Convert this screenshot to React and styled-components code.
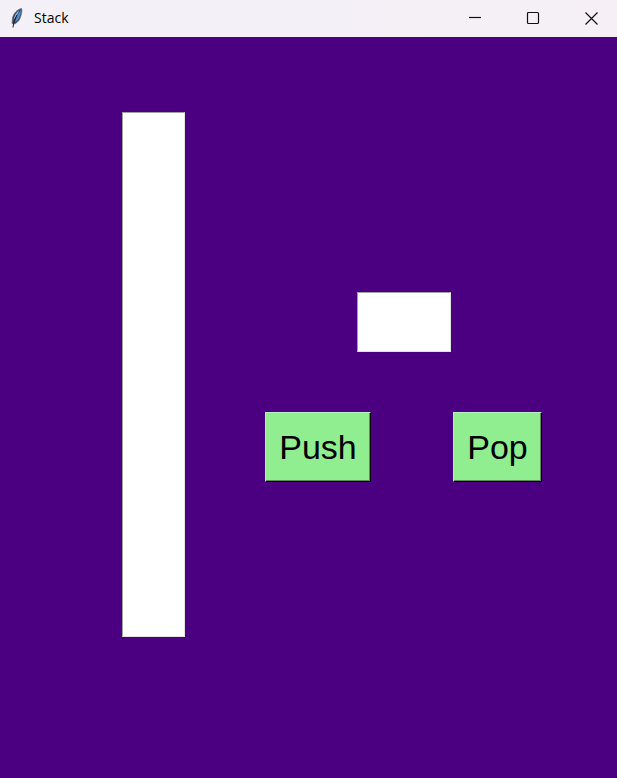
import React, { useState } from "react";
import styled, { createGlobalStyle } from "styled-components";

const GlobalStyle = createGlobalStyle`
  *, *::before, *::after { box-sizing: border-box; }
  body { margin: 0; background: #4b0082; }
`;

const Window = styled.div`
  display: flex;
  flex-direction: column;
  min-height: 100vh;
  background: #4b0082;
`;

const TitleBar = styled.header`
  display: flex;
  align-items: center;
  height: 37px;
  padding: 0 3px 2px 9px;
  background: linear-gradient(90deg, #f3f0f8, #f6f0f6);
`;

const FeatherIcon = styled.svg`
  width: 16px;
  height: 22px;
  margin-right: 9px;
`;

const Title = styled.h1`
  flex: 1;
  margin: 0;
  font: 400 14px/20px "Open Sans", "Noto Sans", sans-serif;
  color: #000;
`;

const CaptionButtons = styled.div`
  display: flex;
  gap: 12px;
`;

const CaptionButton = styled.button`
  display: grid;
  place-items: center;
  width: 46px;
  height: 34px;
  padding: 0;
  border: 0;
  background: transparent;

  svg {
    width: 14px;
    height: 14px;
    fill: none;
    stroke: #111;
    stroke-width: 1.2;
  }
`;

const Content = styled.main`
  flex: 1;
  display: flex;
  justify-content: center;
  align-items: flex-start;
  gap: 80px;
  padding: 75px 75px 75px 122px;
`;

const StackList = styled.select`
  appearance: none;
  flex: none;
  width: 63px;
  height: 525px;
  padding: 2px;
  border: 1px solid;
  border-color: #a0a0a0 #e3e3e3 #e3e3e3 #a0a0a0;
  border-radius: 0;
  outline: 0;
  background: #fff;
  font: 34px "Liberation Sans", Arial, sans-serif;
  overflow: hidden;
`;

const Controls = styled.form`
  display: flex;
  flex-direction: column;
  align-items: center;
  gap: 60px;
  padding-top: 180px;
`;

const ValueInput = styled.input`
  width: 94px;
  height: 60px;
  padding: 2px;
  border: 1px solid;
  border-color: #a0a0a0 #e3e3e3 #e3e3e3 #a0a0a0;
  border-radius: 0;
  outline: 0;
  background: #fff;
  font: 34px "Liberation Sans", Arial, sans-serif;
`;

const Actions = styled.div`
  display: flex;
  gap: 82px;
`;

const ActionButton = styled.button`
  width: ${({ $wide }) => ($wide ? 106 : 89)}px;
  height: 70px;
  padding: 0;
  border: 1px solid;
  border-color: #b5f0c0 #000 #000 #b5f0c0;
  border-radius: 0;
  background: #90ee90;
  box-shadow: inset -1px -1px 0 #569056;
  color: #000;
  font: 34px/40px "Liberation Sans", Arial, sans-serif;
`;

export default function App() {
  const [items, setItems] = useState([]);
  const [value, setValue] = useState("");

  const push = (event) => {
    event.preventDefault();
    if (!value) return;
    setItems([value, ...items]);
    setValue("");
  };

  return (
    <Window>
      <GlobalStyle />
      <TitleBar>
        <FeatherIcon viewBox="0 0 16 22" aria-hidden="true">
          <path d="M12.500 1.500C8 2.500 4.500 6.500 3.500 11L3 16.500l2.500.5c3.500-1.500 5.500-4.500 6.500-8.500.8-2.800 1.200-5 .5-7Z" fill="#34475e" stroke="#6d6f7a" strokeWidth="0.8" />
          <path d="M12 2.800C9.500 6 7.200 10 6 15c2.800-1.500 4.500-4 5.300-7.200Z" fill="#4a8fdb" />
          <path d="M10.500 3.200C7 5.500 5 9 4.600 13L8 8Z" fill="#8fb6e0" />
          <path d="M8 8C6 12 4.500 15.500 4 20.500" fill="none" stroke="#222" strokeWidth="1" />
        </FeatherIcon>
        <Title>Stack</Title>
        <CaptionButtons>
          <CaptionButton type="button" aria-label="Minimize">
            <svg viewBox="0 0 14 14"><path d="M1 6.500h12" /></svg>
          </CaptionButton>
          <CaptionButton type="button" aria-label="Maximize">
            <svg viewBox="0 0 14 14"><rect x="1.500" y="1.500" width="11" height="11" rx="1" /></svg>
          </CaptionButton>
          <CaptionButton type="button" aria-label="Close">
            <svg viewBox="0 0 14 14"><path d="m1.500 1.500 12 12M13.500 1.500l-12 12" /></svg>
          </CaptionButton>
        </CaptionButtons>
      </TitleBar>
      <Content>
        <StackList size={12} aria-label="Stack contents">
          {items.map((item, index) => (
            <option key={items.length - index}>{item}</option>
          ))}
        </StackList>
        <Controls onSubmit={push}>
          <ValueInput
            aria-label="Value"
            value={value}
            onChange={(event) => setValue(event.target.value)}
          />
          <Actions>
            <ActionButton type="submit" $wide>Push</ActionButton>
            <ActionButton type="button" onClick={() => setItems(items.slice(1))}>Pop</ActionButton>
          </Actions>
        </Controls>
      </Content>
    </Window>
  );
}
